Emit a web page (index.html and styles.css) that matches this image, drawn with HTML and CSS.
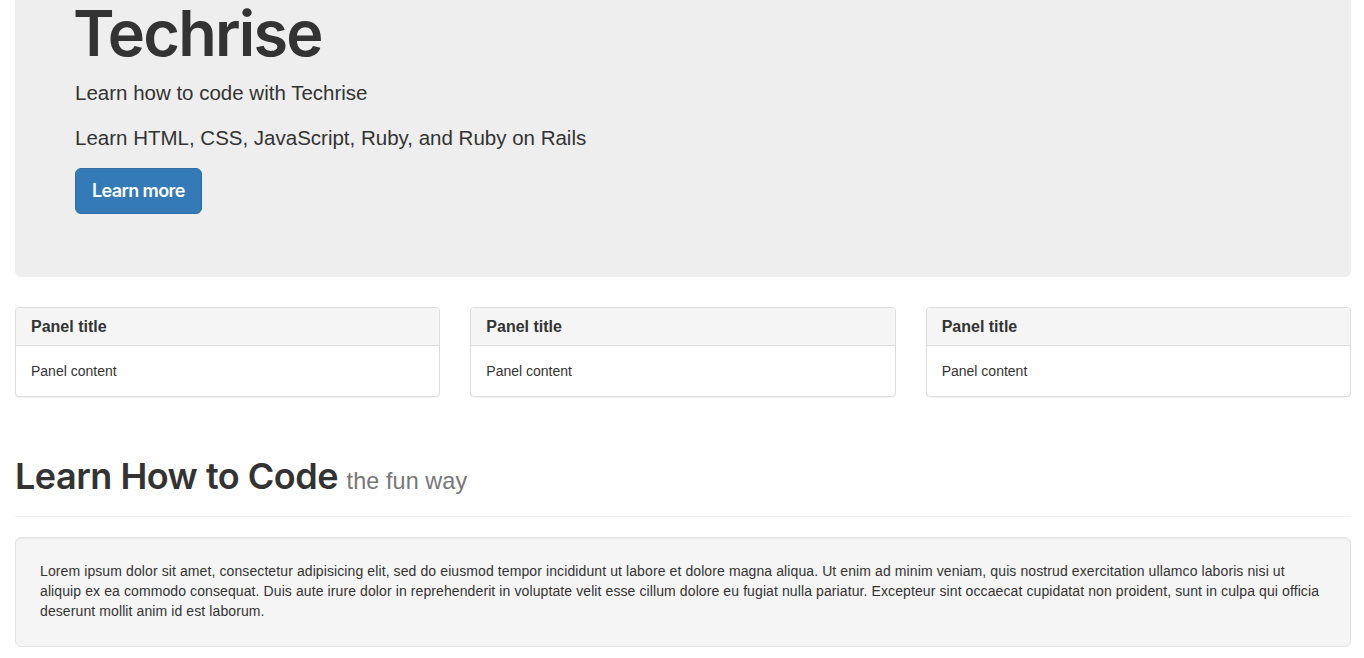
FILE: index.html
```html
<!DOCTYPE html>
<html lang="en">
<head>
<meta charset="utf-8">
<title>Techrise</title>
<link rel="stylesheet" href="styles.css">
</head>
<body>
<div class="container">
  <div class="jumbotron">
    <h1>Techrise</h1>
    <p>Learn how to code with Techrise</p>
    <p>Learn HTML, CSS, JavaScript, Ruby, and Ruby on Rails</p>
    <p><a class="btn" href="#">Learn more</a></p>
  </div>

  <div class="row">
    <div class="col">
      <div class="panel">
        <div class="panel-heading"><h3 class="panel-title">Panel title</h3></div>
        <div class="panel-body">Panel content</div>
      </div>
    </div>
    <div class="col">
      <div class="panel">
        <div class="panel-heading"><h3 class="panel-title">Panel title</h3></div>
        <div class="panel-body">Panel content</div>
      </div>
    </div>
    <div class="col">
      <div class="panel">
        <div class="panel-heading"><h3 class="panel-title">Panel title</h3></div>
        <div class="panel-body">Panel content</div>
      </div>
    </div>
  </div>

  <div class="page-header">
    <h1>Learn How to Code <small>the fun way</small></h1>
  </div>

  <div class="well">
    Lorem ipsum dolor sit amet, consectetur adipisicing elit, sed do eiusmod tempor incididunt ut labore et dolore magna aliqua. Ut enim ad minim veniam, quis nostrud exercitation ullamco laboris nisi ut aliquip ex ea commodo consequat. Duis aute irure dolor in reprehenderit in voluptate velit esse cillum dolore eu fugiat nulla pariatur. Excepteur sint occaecat cupidatat non proident, sunt in culpa qui officia deserunt mollit anim id est laborum.
  </div>
</div>
</body>
</html>
```

FILE: styles.css
```css
* { box-sizing: border-box; }
html, body { margin: 0; padding: 0; }
body {
  font-family: "Liberation Sans", Arial, sans-serif;
  font-size: 14px;
  line-height: 1.42857;
  color: #333;
  background: #fff;
  overflow: hidden;
}
.container {
  padding: 0 13px 0 15px;
}
.jumbotron {
  margin-top: -69px;
  margin-bottom: 30px;
  padding: 48px 60px;
  background: #eee;
  border-radius: 6px;
}
.jumbotron h1 {
  margin: 20px 0 10px;
  margin-left: -2px;
  font-family: Inter, "Liberation Sans", sans-serif;
  font-size: 63px;
  font-weight: 600;
  line-height: 1.1;
  letter-spacing: -1.8px;
}
.jumbotron p {
  margin: 0 0 15px;
  font-size: 20.5px;
  font-weight: 400;
  line-height: 30px;
}
.btn {
  display: inline-block;
  padding: 10px 16px;
  font-family: Inter, "Liberation Sans", sans-serif;
  font-size: 18px;
  line-height: 24px;
  font-weight: 600;
  letter-spacing: -0.6px;
  color: #fff;
  background: #337ab7;
  border: 1px solid #2e6da4;
  border-radius: 6px;
  text-decoration: none;
  vertical-align: top;
}
.row {
  display: flex;
  margin: 0 -15px;
}
.col {
  flex: 1 1 0;
  padding: 0 15px;
}
.panel {
  margin-bottom: 20px;
  background: #fff;
  border: 1px solid #ddd;
  border-radius: 4px;
  box-shadow: 0 1px 1px rgba(0,0,0,0.05);
}
.panel-heading {
  padding: 10px 15px;
  height: 38px;
  background: #f5f5f5;
  border-bottom: 1px solid #ddd;
  border-radius: 3px 3px 0 0;
}
.panel-title {
  margin: 0;
  font-size: 16px;
  font-weight: 700;
  line-height: 1.1;
  color: #333;
}
.panel-body {
  padding: 16px 15px 14px;
}
.page-header {
  margin: 40px 0 20px;
  padding-bottom: 9px;
  border-bottom: 1px solid #eee;
}
.page-header h1 {
  margin: 0 0 10px;
  font-family: Inter, "Liberation Sans", sans-serif;
  font-size: 36px;
  font-weight: 600;
  line-height: 1.1;
  letter-spacing: -0.5px;
}
.page-header small {
  font-family: "Liberation Sans", Arial, sans-serif;
  font-size: 65%;
  font-weight: 400;
  letter-spacing: 0.1px;
  color: #777;
}
.well {
  padding: 24px;
  margin-bottom: 20px;
  background: #f5f5f5;
  border: 1px solid #e3e3e3;
  border-radius: 6px;
  box-shadow: inset 0 1px 1px rgba(0,0,0,0.05);
  letter-spacing: 0.1px;
}
```
